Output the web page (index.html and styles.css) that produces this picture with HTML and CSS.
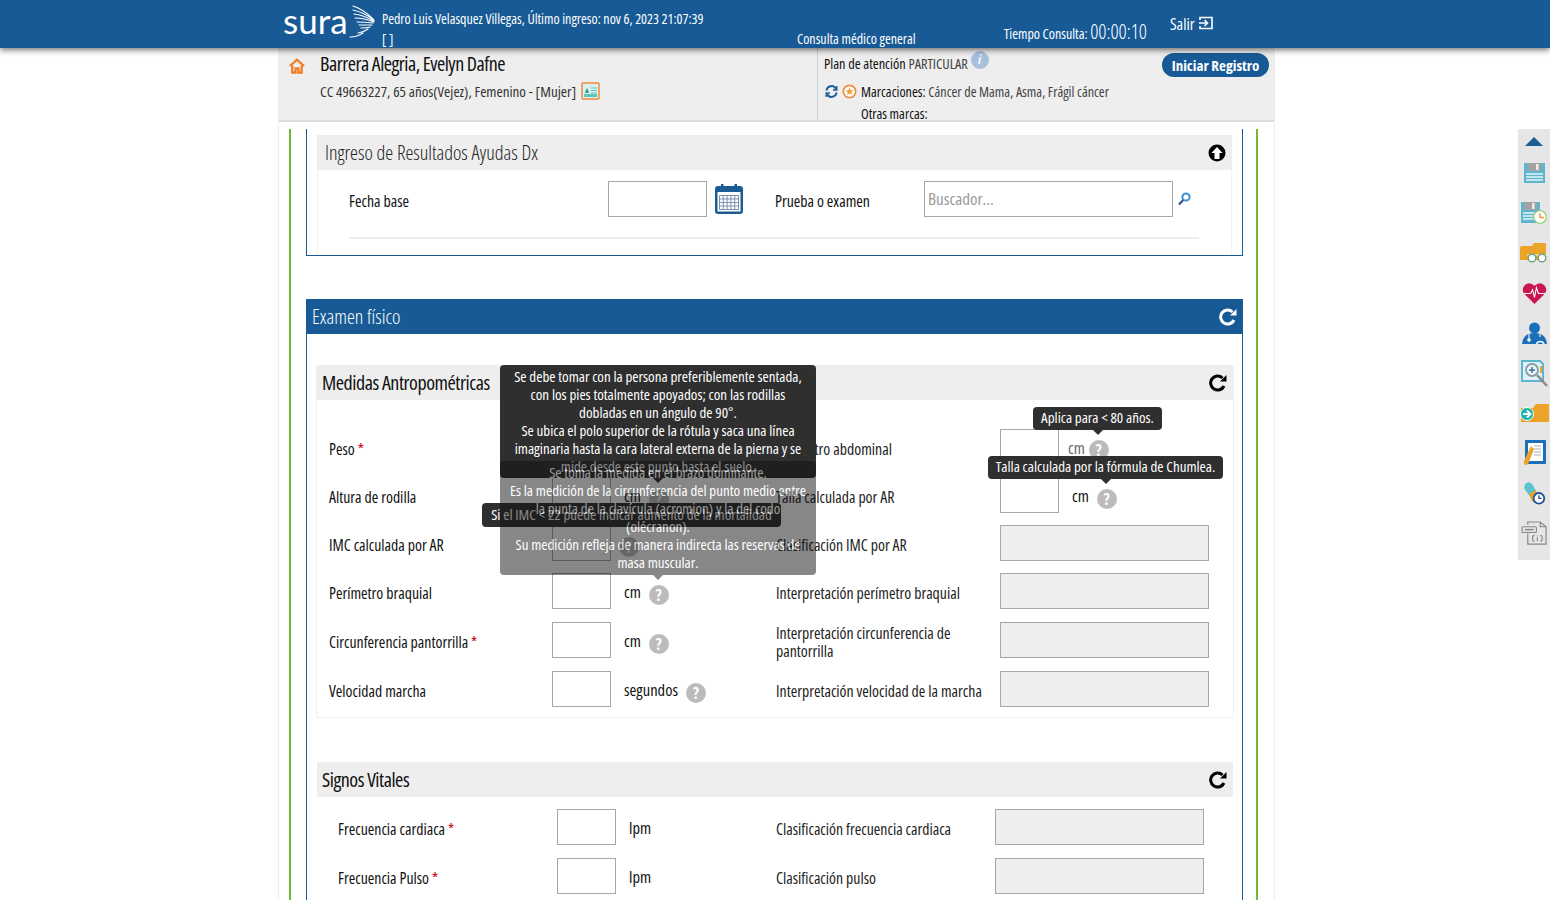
FILE: index.html
```html
<!DOCTYPE html>
<html lang="es">
<head>
    <meta charset="UTF-8">
    <title>Examen físico</title>
    <link rel="stylesheet" href="styles.css">
</head>
<body>

    <div class="top-bar">
        <div class="top-inner">
            <div class="logo">
                <span class="logo-text">sura</span>
                <svg class="logo-wing" width="26" height="34" viewBox="0 0 26 34" fill="none" stroke="#fff" stroke-width="1.2">
                    <path d="M4 1 Q14 4 24 14 M4 5 Q14 7 25 15 M5 9 Q14 10 25 16 M6 13 Q15 13 25 17 M8 17 Q16 17 24 18 M10 20 Q17 20 23 20 M12 23 Q18 23 21 22 M9 28 Q15 27 19 24 M1 32 Q8 32 14 28" stroke-linecap="round"/>
                </svg>
            </div>
            <div class="user-info">
                <div>Pedro Luis Velasquez Villegas, Último ingreso: nov 6, 2023 21:07:39</div>
                <div class="user-line2">[ ]</div>
            </div>
            <div class="consult-type">Consulta médico general</div>
            <div class="consult-time">Tiempo Consulta: <span class="clock">00:00:10</span></div>
            <div class="logout">Salir
                <svg width="15" height="14" viewBox="0 0 15 14" fill="none" stroke="#fff" stroke-width="1.6">
                    <path d="M2 4 V1.5 H14 V12.5 H2 V10"/><path d="M1 7 H9 M6.5 4 L9.5 7 L6.5 10"/>
                </svg>
            </div>
        </div>
    </div>

    <div class="page">
        <div class="patient-bar">
            <div class="patient-left">
                <svg class="home-icon" width="16" height="16" viewBox="0 0 17 17" fill="none" stroke="#f47a20" stroke-width="2.4">
                    <path d="M1 8.5 L8.5 1.8 L16 8.5"/><path d="M3.5 8 V15.5 H7 V11 H10 V15.5 H13.5 V8"/>
                </svg>
                <div>
                    <div class="patient-name">Barrera Alegria, Evelyn Dafne</div>
                    <div class="patient-data">CC 49663227, 65 años(Vejez), Femenino - [Mujer]
                        <svg class="card-icon" width="19" height="18" viewBox="0 0 19 18">
                            <rect x="1" y="1" width="17" height="16" rx="1" fill="#d9f1ee" stroke="#f08a3c" stroke-width="1.5"/>
                            <rect x="3" y="12" width="13" height="3" fill="#5cc4bb"/>
                            <path d="M4 11 L5 8 L6 6 L7 8 L8 11Z" fill="#2f9d92"/>
                            <path d="M10 6 H16 M10 8.5 H16 M10 11 H16" stroke="#5cc4bb"/>
                        </svg>
                    </div>
                </div>
            </div>
            <div class="patient-right">
                <div class="plan-line">Plan de atención <span class="soft">PARTICULAR</span> <span class="info-dot">i</span></div>
                <div class="marks-line">
                    <svg width="13" height="13" viewBox="0 0 13 13" fill="none" stroke="#1b5c94" stroke-width="2">
                        <path d="M1.5 5.5 A5 5 0 0 1 11 4 M11.5 7.5 A5 5 0 0 1 2 9"/>
                        <path d="M11.8 1 V5 H8 M1.2 12 V8 H5" stroke-width="1.4"/>
                    </svg>
                    <svg width="15" height="15" viewBox="0 0 15 15">
                        <circle cx="7.5" cy="7.5" r="6.2" fill="#fff" stroke="#f08a3c" stroke-width="1.7"/>
                        <path d="M7.5 3.5 L8.7 6.2 L11.5 6.4 L9.3 8.3 L10 11 L7.5 9.6 L5 11 L5.7 8.3 L3.5 6.4 L6.3 6.2Z" fill="#f0a030"/>
                    </svg>
                    <span>Marcaciones: <span class="soft">Cáncer de Mama, Asma, Frágil cáncer</span></span>
                </div>
                <div class="other-marks">Otras marcas:</div>
                <button class="start-btn">Iniciar Registro</button>
            </div>
        </div>

        <div class="green-frame">
            <div class="panel panel-results">
                <div class="section-head head-light">
                    Ingreso de Resultados Ayudas Dx
                    <svg width="18" height="18" viewBox="0 0 18 18">
                        <circle cx="9" cy="9" r="8.5" fill="#000"/>
                        <path d="M9 3 L14.5 9 H11.5 V15 H6.5 V9 H3.5Z" fill="#fff"/>
                    </svg>
                </div>
                <div class="results-body">
                    <div class="results-row">
                        <span class="results-label">Fecha base</span>
                        <span class="box date-box"></span>
                        <svg class="calendar" width="28" height="30" viewBox="0 0 28 30">
                            <rect x="0" y="2" width="28" height="28" rx="3" fill="#1b5c94"/>
                            <rect x="2.5" y="8" width="23" height="19.5" fill="#fff"/>
                            <rect x="6" y="0" width="2.5" height="6" fill="#1b5c94"/>
                            <rect x="19.5" y="0" width="2.5" height="6" fill="#1b5c94"/>
                            <path d="M4.5 11.5 H23.5 M4.5 15 H23.5 M4.5 18.5 H23.5 M4.5 22 H23.5 M4.5 25.5 H23.5 M4.5 11.5 V25.5 M8.3 11.5 V25.5 M12.1 11.5 V25.5 M15.9 11.5 V25.5 M19.7 11.5 V25.5 M23.5 11.5 V25.5" stroke="#7c93ad" stroke-width="1" fill="none"/>
                        </svg>
                        <span class="results-label exam-label">Prueba o examen</span>
                        <span class="box search-box">Buscador...</span>
                        <svg class="search-icon" width="13" height="14" viewBox="0 0 13 14" fill="none">
                            <circle cx="8" cy="5" r="3.6" stroke="#3d8fd0" stroke-width="2"/>
                            <path d="M5.2 8 L1 12.5" stroke="#2b4f8c" stroke-width="2"/>
                        </svg>
                    </div>
                    <div class="divider"></div>
                </div>
            </div>

            <div class="panel panel-exam">
                <div class="exam-title">
                    Examen físico
                    <svg width="18" height="18" viewBox="0 0 18 18" fill="none" stroke="#fff" stroke-width="3">
                        <path d="M15 12 A7 7 0 1 1 13.5 4"/><path d="M17.5 1 V7.5 H11Z" fill="#fff" stroke="none"/>
                    </svg>
                </div>

                <div class="form-box">
                    <div class="section-head head-form">
                        Medidas Antropométricas
                        <svg width="18" height="18" viewBox="0 0 18 18" fill="none" stroke="#000" stroke-width="3">
                            <path d="M15 12 A7 7 0 1 1 13.5 4"/><path d="M17.5 1 V7.5 H11Z" fill="#000" stroke="none"/>
                        </svg>
                    </div>
                    <div class="form-rows">
                        <div class="form-row">
                            <span class="row-label">Peso <b class="req">*</b></span>
                            <span class="field"><span class="box num-box"></span><span class="unit">kg</span></span>
                            <span class="row-label">Perímetro abdominal</span>
                            <span class="field"><span class="box num-box"></span><span class="unit unit-soft">cm</span><span class="help help-near">?</span></span>
                        </div>
                        <div class="form-row">
                            <span class="row-label">Altura de rodilla</span>
                            <span class="field"><span class="box num-box"></span><span class="unit">cm</span><span class="help">?</span></span>
                            <span class="row-label">Talla calculada por AR</span>
                            <span class="field"><span class="box num-box"></span><span class="unit">cm</span><span class="help">?</span></span>
                        </div>
                        <div class="form-row">
                            <span class="row-label">IMC calculada por AR</span>
                            <span class="field"><span class="box num-box"></span><span class="help">?</span></span>
                            <span class="row-label">Clasificación IMC por AR</span>
                            <span class="box wide-box"></span>
                        </div>
                        <div class="form-row row-tall">
                            <span class="row-label">Perímetro braquial</span>
                            <span class="field"><span class="box num-box"></span><span class="unit">cm</span><span class="help">?</span></span>
                            <span class="row-label">Interpretación perímetro braquial</span>
                            <span class="box wide-box"></span>
                        </div>
                        <div class="form-row row-tall">
                            <span class="row-label">Circunferencia pantorrilla <b class="req">*</b></span>
                            <span class="field"><span class="box num-box"></span><span class="unit">cm</span><span class="help">?</span></span>
                            <span class="two-lines">Interpretación circunferencia de pantorrilla</span>
                            <span class="box wide-box"></span>
                        </div>
                        <div class="form-row row-tall">
                            <span class="row-label">Velocidad marcha</span>
                            <span class="field"><span class="box num-box"></span><span class="unit">segundos</span><span class="help">?</span></span>
                            <span class="row-label">Interpretación velocidad de la marcha</span>
                            <span class="box wide-box"></span>
                        </div>
                    </div>

                    <div class="tip tip-imc">Si el IMC &lt; 22 puede indicar aumento de la mortalidad</div>
                    <div class="tip tip-rodilla">Se debe tomar con la persona preferiblemente sentada, con los pies totalmente apoyados; con las rodillas dobladas en un ángulo de 90°.<br>Se ubica el polo superior de la rótula y saca una línea imaginaria hasta la cara lateral externa de la pierna y se mide desde este punto hasta el suelo.</div>
                    <div class="tip tip-brazo">Se toma la medida en el brazo dominante.<br>Es la medición de la circunferencia del punto medio entre la punta de la clavícula (acromion) y la del codo (olécranon).<br>Su medición refleja de manera indirecta las reservas de masa muscular.</div>
                    <div class="tip tip-edad">Aplica para &lt; 80 años.</div>
                    <div class="tip tip-talla">Talla calculada por la fórmula de Chumlea.</div>
                </div>

                <div class="vitals">
                    <div class="section-head head-form">
                        Signos Vitales
                        <svg width="18" height="18" viewBox="0 0 18 18" fill="none" stroke="#000" stroke-width="3">
                            <path d="M15 12 A7 7 0 1 1 13.5 4"/><path d="M17.5 1 V7.5 H11Z" fill="#000" stroke="none"/>
                        </svg>
                    </div>
                    <div class="vitals-rows">
                        <div class="vitals-row">
                            <span class="row-label">Frecuencia cardiaca <b class="req">*</b></span>
                            <span class="field"><span class="box num-box"></span><span class="unit">lpm</span></span>
                            <span class="row-label">Clasificación frecuencia cardiaca</span>
                            <span class="box wide-box"></span>
                        </div>
                        <div class="vitals-row">
                            <span class="row-label">Frecuencia Pulso <b class="req">*</b></span>
                            <span class="field"><span class="box num-box"></span><span class="unit">lpm</span></span>
                            <span class="row-label">Clasificación pulso</span>
                            <span class="box wide-box"></span>
                        </div>
                    </div>
                </div>
            </div>
        </div>
    </div>

    <div class="side-tools">
        <div class="tool tool-first">
            <svg width="18" height="9" viewBox="0 0 18 9"><path d="M9 0 L18 9 H0Z" fill="#1b5c94"/></svg>
        </div>
        <div class="tool">
            <svg width="21" height="20" viewBox="0 0 21 20">
                <path d="M0 0 H21 V20 H0Z" fill="#5db6cc"/><rect x="4" y="0" width="13" height="8" fill="#a3a3a3"/><rect x="12" y="1" width="2.5" height="6" fill="#eee"/>
                <path d="M2 11 H19 M2 14 H19 M2 17 H19" stroke="#e3f4f8" stroke-width="1.3"/>
            </svg>
        </div>
        <div class="tool">
            <svg width="26" height="22" viewBox="0 0 26 22">
                <path d="M0 0 H19 V21 H0Z" fill="#5db6cc"/><rect x="3" y="0" width="13" height="8" fill="#a3a3a3"/><rect x="11" y="1" width="2.5" height="6" fill="#eee"/>
                <path d="M2 11 H17 M2 14 H17 M2 17 H17" stroke="#e3f4f8" stroke-width="1.3"/>
                <circle cx="19" cy="15" r="6.3" fill="#fff" stroke="#97d07a" stroke-width="1.3"/><path d="M19 11 V15.5 H23" fill="none" stroke="#f0a030" stroke-width="1.5"/>
            </svg>
        </div>
        <div class="tool">
            <svg width="29" height="20" viewBox="0 0 29 20">
                <path d="M0 5 Q0 3 2 3 H12 L14 0 H26 V17 H0Z" fill="#eba329"/>
                <path d="M7 12 H29" stroke="#f6efe0" stroke-width="1.2"/>
                <circle cx="12" cy="15" r="3.8" fill="#fff" stroke="#6aa58a" stroke-width="1.4"/><circle cx="22" cy="15" r="3.8" fill="#fff" stroke="#6aa58a" stroke-width="1.4"/>
            </svg>
        </div>
        <div class="tool">
            <svg width="25" height="23" viewBox="0 0 26 24">
                <path d="M13 23 L2 12 Q-1 7 3 3 Q8 -1 13 4 Q18 -1 23 3 Q27 7 24 12Z" fill="#c8174f"/>
                <path d="M2 12 H9 L11 8 L13 16 L15 6 L17 12 H24" fill="none" stroke="#fff" stroke-width="1.1"/>
            </svg>
        </div>
        <div class="tool">
            <svg width="25" height="22" viewBox="0 0 25 22">
                <circle cx="12.5" cy="6" r="5.5" fill="#1a6fb8"/>
                <path d="M0 22 Q1 11 12.5 11 Q24 11 25 22Z" fill="#1a6fb8"/>
                <path d="M7 12 V17 M18 12 V15" stroke="#fff" stroke-width="1"/>
                <circle cx="7" cy="18" r="1.8" fill="#fff"/>
                <path d="M14.5 22 A4 4 0 0 1 22 22" fill="none" stroke="#fff" stroke-width="1.5"/>
            </svg>
        </div>
        <div class="tool">
            <svg width="27" height="27" viewBox="0 0 27 27">
                <path d="M1 1 H19 L22 4 V21 H1Z" fill="#dff3f6" stroke="#5db6cc" stroke-width="2"/>
                <circle cx="11" cy="10" r="6" fill="#eef3f7" stroke="#8a9ca8" stroke-width="1.8"/>
                <path d="M8 10 H14 M11 7 V13" stroke="#2f6ea5" stroke-width="1.4"/>
                <path d="M16 15 L26 26" stroke="#888" stroke-width="2.4"/>
                <path d="M20 6 V13" stroke="#eba329" stroke-width="2"/>
            </svg>
        </div>
        <div class="tool">
            <svg width="29" height="18" viewBox="0 0 29 18">
                <path d="M1 4 H13 L16 0 H29 V18 H1Z" fill="#eba329"/>
                <circle cx="7" cy="10" r="6.5" fill="#16b3ad" stroke="#fff" stroke-width="1"/>
                <path d="M3 10 H9 M7 6.5 L10.5 10 L7 13.5" fill="none" stroke="#fff" stroke-width="2"/>
            </svg>
        </div>
        <div class="tool">
            <svg width="23" height="26" viewBox="0 0 23 26">
                <rect x="2" y="0" width="21" height="24" rx="1" fill="#1a6fb8"/>
                <path d="M5 3 H20 V21 H5Z" fill="#fff"/>
                <path d="M11 6 H18 M11 9 H18 M11 12 H18 M11 15 H18" stroke="#9db3c6"/>
                <path d="M8 6 L1 21 Q0 25 3 25 Q5 25 6 22 L11 9Z" fill="#eba329"/>
            </svg>
        </div>
        <div class="tool">
            <svg width="23" height="24" viewBox="0 0 26 26">
                <path d="M2 9 Q0 3 5 1 Q9 0 11 4 L19 18 Q17 22 13 24Z" fill="#5cc4cf"/>
                <path d="M7 14 L14 10 L19 18 Q19 24 13 24 Q10 23 9 20Z" fill="#eba329"/>
                <circle cx="18" cy="19" r="6" fill="#fff" stroke="#1b4f9c" stroke-width="2"/>
                <path d="M18 15.5 V19 H21" fill="none" stroke="#1b4f9c" stroke-width="1.4"/>
            </svg>
        </div>
        <div class="tool">
            <svg width="27" height="25" viewBox="0 0 28 26" fill="none" stroke="#888" stroke-width="1.2">
                <path d="M7 4 V1 H20 L26 6 V24 H7 V13"/><path d="M20 1 V6 H26"/>
                <rect x="1" y="6" width="15" height="6" rx="1" fill="#e6e6e6"/>
                <path d="M4 9 H13" stroke-width="1.6"/>
                <path d="M14 15 Q12 15 12 17 V19 Q12 21 14 21 M20 15 Q22 15 22 17 V19 Q22 21 20 21 M17 17 V21 M17 15 V15.8"/>
            </svg>
        </div>
    </div>

</body>
</html>
```

FILE: styles.css
```css
body {
    font-family: "Open Sans", "Liberation Sans", sans-serif;
    font-stretch: 75%;
    font-size: 15.8px;
    color: #222;
    background-color: white;
    margin: 0;
    height: 900px;
    overflow: hidden;
}
.top-bar {
    height: 48px;
    background-color: #175a95;
    color: white;
    box-shadow: 0 2px 6px rgba(0, 0, 0, 0.55);
    position: relative;
    z-index: 5;
}
.top-inner {
    width: 997px;
    margin-left: 278px;
    height: 48px;
    display: flex;
    font-size: 14px;
}
.logo {
    width: 104px;
    padding-left: 5px;
    box-sizing: border-box;
    display: flex;
    align-items: center;
}
.logo-text {
    font-family: "Lato", sans-serif;
    font-stretch: normal;
    font-size: 35px;
    line-height: 40px;
    width: 67px;
    margin-top: -8px;
}
.logo-wing {
    margin: -4px 0 0 -1px;
    flex-shrink: 0;
}
.user-info {
    width: 415px;
    padding-top: 9px;
    line-height: 20px;
}
.consult-type {
    width: 207px;
    padding-top: 29px;
    line-height: 20px;
}
.consult-time {
    width: 166px;
    padding-top: 20px;
    line-height: 24px;
}
.clock {
    font-size: 20px;
    font-weight: 300;
}
.logout {
    padding-top: 14px;
    line-height: 20px;
    font-size: 16px;
}
.page {
    width: 997px;
    margin-left: 278px;
    height: 852px;
    border-left: 1px solid #eee;
    border-right: 1px solid #eee;
    box-sizing: border-box;
}
.patient-bar {
    height: 74px;
    background-color: #eee;
    border-bottom: 2px solid #d9dddf;
    box-sizing: border-box;
    display: flex;
    position: relative;
}
.patient-left {
    width: 539px;
    border-right: 1px solid #ccd3d8;
    display: flex;
    box-sizing: border-box;
    padding: 3px 0 0 10px;
}
.home-icon {
    margin: 7px 15px 0 0;
    flex-shrink: 0;
}
.patient-name {
    font-size: 20px;
    line-height: 26px;
    letter-spacing: -0.5px;
    color: #111;
}
.patient-data {
    font-size: 15px;
    line-height: 20px;
    margin-top: 4px;
    color: #333;
    display: flex;
    align-items: center;
    gap: 5px;
}
.patient-right {
    padding: 1px 0 0 6px;
    font-size: 14.1px;
    color: #111;
}
.plan-line {
    height: 27px;
    line-height: 20px;
    padding-top: 2px;
    box-sizing: border-box;
    font-size: 14.3px;
}
.soft {
    color: #444;
}
.info-dot {
    display: inline-block;
    width: 18px;
    height: 18px;
    border-radius: 50%;
    background-color: #a9c0dc;
    color: white;
    font-size: 12px;
    line-height: 18px;
    font-weight: bold;
    font-style: italic;
    text-align: center;
    vertical-align: 5px;
}
.marks-line {
    display: flex;
    align-items: center;
    gap: 4px;
    height: 24px;
    margin-top: 3px;
    padding-left: 1px;
}
.other-marks {
    padding-left: 37px;
    line-height: 20px;
    margin-top: 1px;
}
.start-btn {
    position: absolute;
    left: 883px;
    top: 5px;
    width: 107px;
    height: 24px;
    border: none;
    border-radius: 12px;
    background-color: #175a95;
    color: white;
    font-family: inherit;
    font-stretch: inherit;
    font-size: 15px;
    font-weight: bold;
    padding: 0;
}
.green-frame {
    margin: 7px 0 0 10px;
    width: 969px;
    height: 771px;
    border-left: 2px solid #6fb83a;
    border-right: 2px solid #6fb83a;
    box-sizing: border-box;
    padding: 0 13px 0 15px;
}
.panel {
    border-left: 1px solid #175a95;
    border-right: 1px solid #175a95;
    box-sizing: border-box;
}
.panel-results {
    height: 127px;
    border-bottom: 1px solid #175a95;
    padding: 6px 10px 0;
}
.section-head {
    display: flex;
    justify-content: space-between;
    align-items: center;
    background-color: #eee;
    height: 35px;
    box-sizing: border-box;
}
.head-light {
    font-size: 20px;
    font-weight: 300;
    color: #222;
    padding: 0 6px 0 8px;
}
.results-body {
    height: 85px;
    box-sizing: border-box;
    border-left: 1px solid #f2f2f2;
    border-right: 1px solid #f2f2f2;
    padding: 11px 32px 0 31px;
}
.results-row {
    display: flex;
    align-items: center;
    height: 36px;
}
.results-label {
    width: 259px;
    color: #111;
    padding-top: 3px;
    box-sizing: border-box;
}
.exam-label {
    width: 149px;
}
.box {
    display: block;
    box-sizing: border-box;
    border: 1px solid #a6a6a6;
    height: 36px;
    background-color: white;
}
.date-box {
    width: 99px;
    margin-right: 8px;
}
.calendar {
    margin-right: 32px;
}
.search-box {
    width: 249px;
    color: #999;
    font-size: 17px;
    line-height: 34px;
    padding-left: 3px;
    margin-right: 5px;
}
.divider {
    height: 2px;
    background-color: #eee;
    margin-top: 20px;
}
.panel-exam {
    margin-top: 43px;
    height: 700px;
}
.exam-title {
    background-color: #175a95;
    color: white;
    font-size: 20px;
    font-weight: 300;
    height: 35px;
    display: flex;
    justify-content: space-between;
    align-items: center;
    padding: 0 5px 0 5px;
}
.form-box {
    margin: 31px 8px 0 9px;
    height: 352px;
    border: 1px solid #f0f0f0;
    border-top: none;
    position: relative;
}
.head-form {
    font-size: 20px;
    letter-spacing: -0.45px;
    color: #111;
    padding: 0 6px 0 5px;
}
.form-rows {
    padding: 29px 0 0 12px;
}
.form-row {
    display: grid;
    grid-template-columns: 223px 224px 224px 209px;
    align-items: start;
    height: 48px;
}
.row-tall {
    height: 49px;
}
.row-label {
    line-height: 36px;
    padding-top: 2px;
}
.form-row > .row-label:first-child,
.vitals-row > .row-label:first-child {
    color: #111;
}
.field {
    display: flex;
    align-items: center;
}
.num-box {
    width: 59px;
    flex-shrink: 0;
}
.wide-box {
    width: 209px;
    background-color: #eee;
}
.unit {
    margin-left: 13px;
    font-size: 16.5px;
    color: #111;
}
.unit-soft {
    margin-left: 9px;
    color: #666;
}
.help {
    width: 20px;
    height: 20px;
    border-radius: 50%;
    background-color: #bbb;
    color: white;
    font-size: 16px;
    font-weight: bold;
    text-align: center;
    line-height: 20px;
    margin: 8px 0 0 8px;
}
.help-near {
    margin: 6px 0 0 4px;
}
.two-lines {
    line-height: 18px;
    width: 200px;
    margin-top: 2px;
}
.vitals {
    margin: 44px 9px 0 10px;
}
.vitals-rows {
    padding: 12px 0 0 21px;
}
.vitals-row {
    display: grid;
    grid-template-columns: 219px 219px 219px 209px;
    align-items: start;
    height: 49px;
}
.tip {
    position: absolute;
    box-sizing: border-box;
    color: white;
    font-size: 15px;
    line-height: 18px;
    text-align: center;
    border-radius: 4px;
    padding: 2px 8px;
    background-color: #2f2f2f;
}
.tip::after {
    content: "";
    position: absolute;
    top: 100%;
    left: 50%;
    margin-left: -5px;
    border: 5px solid transparent;
    border-bottom: none;
    border-top-color: #2f2f2f;
}
.tip-rodilla {
    left: 183px;
    top: 0;
    width: 316px;
    height: 113px;
}
.tip-brazo {
    left: 183px;
    top: 96px;
    width: 316px;
    height: 114px;
    background-color: #111;
    opacity: 0.5;
}
.tip-brazo::after {
    border-top-color: #111;
}
.tip-imc {
    left: 165px;
    top: 138px;
    width: 299px;
    height: 24px;
    white-space: nowrap;
    padding: 2px 0;
}
.tip-imc::after {
    display: none;
}
.tip-edad {
    left: 716px;
    top: 42px;
    width: 129px;
    height: 23px;
    padding: 1px 0;
}
.tip-talla {
    left: 671px;
    top: 91px;
    width: 235px;
    height: 23px;
    padding: 1px 0;
    white-space: nowrap;
}
.req {
    color: #d0021b;
    font-weight: normal;
}
.side-tools {
    position: fixed;
    right: 0;
    top: 129px;
    width: 32px;
    height: 431px;
    background-color: #e6e6e6;
    box-sizing: border-box;
}
.tool {
    height: 40px;
    display: flex;
    align-items: center;
    justify-content: center;
}
.tool-first {
    height: 24px;
}
```
